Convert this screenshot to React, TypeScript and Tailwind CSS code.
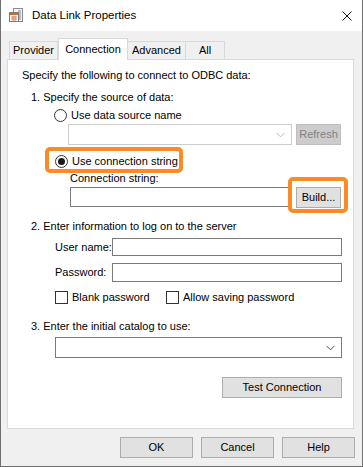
import { useState } from "react"

const font = { fontFamily: '"Liberation Sans", Arial, sans-serif' }

const Radio = ({ checked, label }: { checked: boolean; label: string }) => (
  <div className="flex items-center h-[15px]">
    <span className="w-[13px] h-[13px] rounded-full border border-[#333333] bg-white flex items-center justify-center">
      {checked && <span className="w-[7px] h-[7px] rounded-full bg-[#1a1a1a]"></span>}
    </span>
    <span className="ml-[4px] leading-[15px]">{label}</span>
  </div>
)

const Check = ({ label }: { label: string }) => (
  <div className="flex items-center h-[15px]">
    <span className="w-[13px] h-[13px] border border-[#333333] bg-white"></span>
    <span className="ml-[4px] leading-[15px]">{label}</span>
  </div>
)

const Chevron = ({ color }: { color: string }) => (
  <svg width="9" height="6" viewBox="0 0 9 6">
    <path d="M0.5 0.8 L4.5 4.8 L8.5 0.8" fill="none" stroke={color} strokeWidth="1" />
  </svg>
)

const Btn = ({ label, w }: { label: string; w: string }) => (
  <button className={`${w} h-[21px] bg-[#e1e1e1] border border-[#adadad] text-black leading-[19px] text-center`}>
    {label}
  </button>
)

const App = () => {
  const [tab, setTab] = useState("Connection")
  const tabs = [
    { name: "Provider", w: "w-[49px]" },
    { name: "Connection", w: "w-[70px]" },
    { name: "Advanced", w: "w-[59px]" },
    { name: "All", w: "w-[40px]" },
  ]

  return (
    <div style={font} className="w-[363px] h-[467px] bg-[#f0f0f0] border-x border-b border-[#707070] text-[11px] text-black flex flex-col">
      {/* title bar */}
      <div className="h-[31px] bg-white flex items-center shrink-0">
        <svg className="ml-[8px]" width="15" height="15" viewBox="0 0 15 15">
          <rect x="4.5" y="0.5" width="9" height="13" fill="#f4f4f4" stroke="#8a8a8a" />
          <rect x="9" y="2" width="3" height="10" fill="#b9b9c9" />
          <rect x="0.5" y="4.5" width="9" height="9" fill="#ffffff" stroke="#7b7b7b" />
          <rect x="1" y="5" width="8" height="2" fill="#e0641e" />
          <path d="M2 9 H8 M2 11 H8 M4 8 V13 M6 8 V13" stroke="#d9825a" strokeWidth="1" />
        </svg>
        <span className="ml-[8px] text-[11.5px]">Data Link Properties</span>
        <svg className="ml-auto mr-[10px]" width="10" height="10" viewBox="0 0 10 10">
          <path d="M0.5 0.5 L9.5 9.5 M9.5 0.5 L0.5 9.5" stroke="#111" strokeWidth="1" />
        </svg>
      </div>

      {/* tabs */}
      <div className="flex items-end ml-[8px] mt-[7px] h-[21px] relative z-10">
        {tabs.map(t => (
          <div
            key={t.name}
            onClick={() => setTab(t.name)}
            className={
              tab === t.name
                ? `${t.w} h-[22px] bg-white border-x border-t border-[#d9d9d9] flex items-start justify-center pt-[2px] -mb-[1px]`
                : `${t.w} h-[18px] bg-[#f0f0f0] border-x border-t border-[#d9d9d9] flex items-center justify-center -ml-[1px] first:ml-0`
            }
          >
            {t.name}
          </div>
        ))}
      </div>

      {/* panel */}
      <div className="relative ml-[6px] w-[347px] h-[370px] bg-white border border-[#d9d9d9] flex flex-col items-start">
        <div className="ml-[14px] mt-[8px] h-[15px] leading-[15px]">Specify the following to connect to ODBC data:</div>
        <div className="ml-[23px] mt-[7px] h-[15px] leading-[15px]">1. Specify the source of data:</div>
        <div className="ml-[46px] mt-[3px]">
          <Radio checked={false} label="Use data source name" />
        </div>
        <div className="ml-[60px] mt-[1px] flex gap-[4px]">
          <div className="w-[224px] h-[21px] bg-white border border-[#cccccc] flex items-center justify-end pr-[6px]">
            <Chevron color="#b8b8b8" />
          </div>
          <div className="w-[45px] h-[21px] bg-[#cccccc] border border-[#bfbfbf] text-[#838383] flex items-center justify-center">
            Refresh
          </div>
        </div>
        <div className="ml-[47px] mt-[9px]">
          <Radio checked={true} label="Use connection string" />
        </div>
        <div className="ml-[62px] mt-[2px] h-[15px] leading-[15px]">Connection string:</div>
        <div className="ml-[62px] mt-[1px] flex gap-[6px]">
          <div className="w-[220px] h-[20px] bg-white border border-[#7a7a7a]"></div>
          <Btn label="Build..." w="w-[45px]" />
        </div>

        <div className="ml-[23px] mt-[11px] h-[15px] leading-[15px]">2. Enter information to log on to the server</div>
        <div className="ml-[47px] mt-[4px] flex items-center">
          <span className="w-[57px]">User name:</span>
          <div className="w-[230px] h-[18px] bg-white border border-[#7a7a7a]"></div>
        </div>
        <div className="ml-[47px] mt-[7px] flex items-center">
          <span className="w-[57px]">Password:</span>
          <div className="w-[230px] h-[19px] bg-white border border-[#7a7a7a]"></div>
        </div>
        <div className="ml-[47px] mt-[8px] flex">
          <div className="w-[111px]">
            <Check label="Blank password" />
          </div>
          <Check label="Allow saving password" />
        </div>

        <div className="ml-[23px] mt-[14px] h-[15px] leading-[15px]">3. Enter the initial catalog to use:</div>
        <div className="ml-[47px] mt-[3px] w-[287px] h-[21px] bg-white border border-[#7a7a7a] flex items-center justify-end pr-[6px]">
          <Chevron color="#555555" />
        </div>
        <div className="ml-[214px] mt-[19px]">
          <Btn label="Test Connection" w="w-[120px]" />
        </div>

        {/* highlights */}
        <div className="absolute left-[37px] top-[87px] w-[138px] h-[26px] border-[4px] border-[#fb8b24] rounded-[5px]"></div>
        <div className="absolute left-[280px] top-[117px] w-[60px] h-[36px] border-[4px] border-[#fb8b24] rounded-[5px]"></div>
      </div>

      {/* footer buttons */}
      <div className="flex gap-[8px] ml-[119px] mt-[8px]">
        <Btn label="OK" w="w-[73px]" />
        <Btn label="Cancel" w="w-[73px]" />
        <Btn label="Help" w="w-[73px]" />
      </div>
    </div>
  )
}

export default App
